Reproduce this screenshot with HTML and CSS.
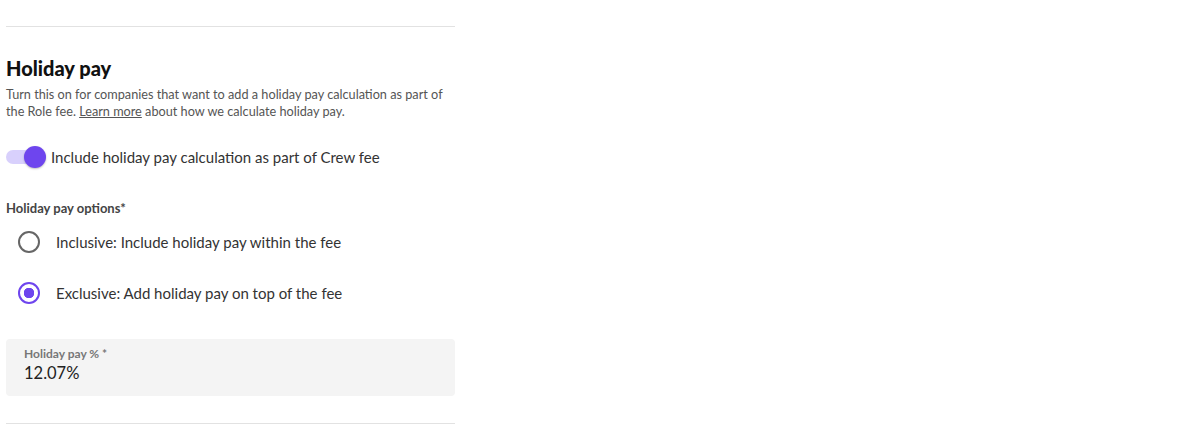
FILE: index.html
```html
<!DOCTYPE html>
<html lang="en">
<head>
    <meta charset="UTF-8">
    <title>Holiday pay</title>
    <link rel="stylesheet" href="styles.css">
</head>
<body>
    <div class="panel">
        <hr class="divider top">
        <h2 class="title">Holiday pay</h2>
        <p class="desc">Turn this on for companies that want to add a holiday pay calculation as part of the Role fee. <a href="#">Learn more</a> about how we calculate holiday pay.</p>

        <label class="toggle-row">
            <span class="toggle"><span class="thumb"></span></span>
            <span>Include holiday pay calculation as part of Crew fee</span>
        </label>

        <div class="group-label">Holiday pay options*</div>
        <div class="radios">
            <label class="radio-row">
                <span class="radio"></span>
                <span>Inclusive: Include holiday pay within the fee</span>
            </label>
            <label class="radio-row">
                <span class="radio checked"></span>
                <span>Exclusive: Add holiday pay on top of the fee</span>
            </label>
        </div>

        <div class="field">
            <div class="field-label">Holiday pay % *</div>
            <div class="field-value">12.07%</div>
        </div>
        <hr class="divider bottom">
    </div>
</body>
</html>
```

FILE: styles.css
```css
body {
    margin: 0;
    font-family: Lato, "Open Sans", sans-serif;
    color: #222;
    background: #fff;
}

.panel {
    width: 449px;
    margin-left: 6px;
    padding-top: 26px;
}

.divider {
    border: none;
    border-top: 1px solid #e2e2e2;
    margin: 0;
}

.title {
    font-size: 20px;
    font-weight: 900;
    color: #111;
    margin: 29px 0 6px;
    line-height: 24px;
}

.desc {
    font-size: 12.7px;
    line-height: 17px;
    color: #555;
    margin: 0;
}

.desc a {
    color: #555;
}

.toggle-row {
    display: flex;
    align-items: center;
    gap: 5px;
    margin-top: 25px;
    font-size: 15px;
    color: #333;
}

.toggle {
    position: relative;
    width: 40px;
    height: 24px;
    display: flex;
    align-items: center;
}

.toggle::before {
    content: "";
    width: 36px;
    height: 14px;
    border-radius: 7px;
    background: #d8d0fc;
}

.thumb {
    position: absolute;
    right: 0;
    top: 1px;
    width: 22px;
    height: 22px;
    border-radius: 50%;
    background: #6e45ee;
    box-shadow: 0 1px 2px rgba(0, 0, 0, 0.25);
}

.group-label {
    margin-top: 31px;
    font-size: 13px;
    font-weight: 700;
    color: #444;
}

.radios {
    display: flex;
    flex-direction: column;
    gap: 29px;
    margin-top: 15px;
}

.radio-row {
    display: flex;
    align-items: center;
    gap: 16px;
    padding-left: 12px;
    font-size: 15px;
    color: #333;
}

.radio {
    width: 22px;
    height: 22px;
    border: 2px solid #666;
    border-radius: 50%;
    box-sizing: border-box;
}

.radio.checked {
    border-color: #6e45ee;
    background: radial-gradient(circle, #6e45ee 5px, #fff 5.5px);
}

.field {
    margin-top: 35px;
    background: #f4f4f4;
    border-radius: 4px;
    padding: 7px 18px 10px;
    height: 57px;
    box-sizing: border-box;
}

.field-label {
    font-size: 12px;
    font-weight: 700;
    color: #777;
    line-height: 15px;
}

.field-value {
    font-size: 16.5px;
    color: #222;
    line-height: 24px;
}

.divider.bottom {
    margin-top: 27px;
}
```
